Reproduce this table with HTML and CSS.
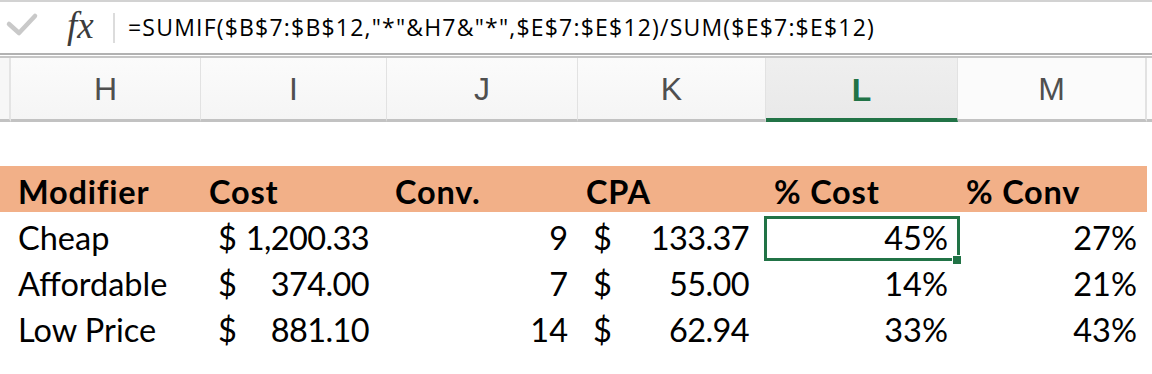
FILE: index.html
```html
<!DOCTYPE html>
<html>
<head>
<meta charset="utf-8">
<link rel="stylesheet" href="styles.css">
</head>
<body>
<div class="formula-bar">
  <svg class="check" width="40" height="40" viewBox="0 0 40 40"><polyline points="9,25 19,34 35,17" fill="none" stroke="#c9c9c9" stroke-width="4.5" stroke-linecap="round" stroke-linejoin="round"/></svg>
  <span class="fx">fx</span>
  <span class="sep"></span>
  <span class="formula">=SUMIF($B$7:$B$12,"*"&amp;H7&amp;"*",$E$7:$E$12)/SUM($E$7:$E$12)</span>
</div>
<div class="col-headers">
  <div class="stub"></div>
  <div class="ch w1">H</div>
  <div class="ch w2">I</div>
  <div class="ch w3">J</div>
  <div class="ch w4">K</div>
  <div class="ch w5 selected">L</div>
  <div class="ch w6 last">M</div>
  <div class="ch-rest"></div>
</div>
<div class="sheet">
  <div class="row head">
    <div class="stub"></div>
    <div class="cell">Modifier</div>
    <div class="cell">Cost</div>
    <div class="cell">Conv.</div>
    <div class="cell">CPA</div>
    <div class="cell">% Cost</div>
    <div class="cell">% Conv</div>
  </div>
  <div class="row">
    <div class="stub"></div>
    <div class="cell">Cheap</div>
    <div class="cell acct acct-i"><span>$</span><span class="amt">1,200.33</span></div>
    <div class="cell num">9</div>
    <div class="cell acct acct-k"><span>$</span><span class="amt">133.37</span></div>
    <div class="cell num active">45%<span class="handle"></span></div>
    <div class="cell num">27%</div>
  </div>
  <div class="row">
    <div class="stub"></div>
    <div class="cell">Affordable</div>
    <div class="cell acct acct-i"><span>$</span><span class="amt">374.00</span></div>
    <div class="cell num">7</div>
    <div class="cell acct acct-k"><span>$</span><span class="amt">55.00</span></div>
    <div class="cell num">14%</div>
    <div class="cell num">21%</div>
  </div>
  <div class="row">
    <div class="stub"></div>
    <div class="cell">Low Price</div>
    <div class="cell acct acct-i"><span>$</span><span class="amt">881.10</span></div>
    <div class="cell num">14</div>
    <div class="cell acct acct-k"><span>$</span><span class="amt">62.94</span></div>
    <div class="cell num">33%</div>
    <div class="cell num">43%</div>
  </div>
</div>
</body>
</html>
```
FILE: styles.css
```css
* { box-sizing: border-box; }
html, body { margin: 0; padding: 0; background: #fff; }
body { width: 1152px; height: 374px; overflow: hidden; font-family: Lato, "Liberation Sans", sans-serif; color: #000; }

.formula-bar {
  height: 55px;
  border-top: 2px solid #d2d2d2;
  border-bottom: 2px solid #b2b2b2;
  display: flex;
  align-items: center;
}
.check { align-self: flex-start; margin-top: -3px; flex: none; }
.fx {
  font-family: "Liberation Serif", serif;
  font-style: italic;
  font-size: 37px;
  color: #3c3c3c;
  margin-left: 27px;
  margin-top: -4px;
  width: 46px;
  flex: none;
}
.sep { width: 2px; height: 30px; background: #dcdcdc; flex: none; }
.formula {
  font-family: "Open Sans", "Liberation Sans", sans-serif;
  font-size: 23px;
  letter-spacing: 1.2px;
  margin-left: 13px;
  margin-top: -2px;
  white-space: nowrap;
}

.col-headers {
  display: flex;
  height: 66px;
  border-top: 2px solid #c6c6c6;
  margin-top: 1px;
}
.stub { width: 11px; flex: none; }
.col-headers .stub { border-right: 2px solid #e4e4e4; background: #f7f7f7; border-bottom: 3px solid #c2c2c2; }
.ch {
  flex: none;
  display: flex;
  align-items: center;
  justify-content: center;
  font-family: "Liberation Sans", Arial, sans-serif;
  font-size: 32px;
  color: #4f4f4f;
  background: linear-gradient(#fbfbfb, #f5f5f5);
  border-right: 1px solid #e2e2e2;
  border-bottom: 3px solid #c2c2c2;
  padding-top: 2px;
}
.ch-rest { flex: 1; border-bottom: 3px solid #c2c2c2; background: #fcfcfc; }
.w1 { width: 190px; }
.w2 { width: 186px; }
.w3 { width: 191px; }
.w4 { width: 188px; }
.w5 { width: 192px; }
.w6 { width: 189px; }
.ch.selected {
  background: linear-gradient(#efefef, #e9e9e9);
  color: #217346;
  font-weight: bold;
  border-bottom: 4px solid #217346;
  padding-top: 4px;
}
.ch.last { background: #fbfbfb; border-right: 2px solid #e2e2e2; }

.sheet { margin-top: 44px; }
.row {
  display: grid;
  grid-template-columns: 10px 191px 186px 191px 188px 192px 189px;
  height: 46px;
  font-size: 32.5px;
  align-items: end;
}
.row.head { width: 1147px; background: #f2b088; font-weight: bold; letter-spacing: 0.8px; }
.cell {
  padding-left: 8px;
  padding-right: 10px;
  padding-bottom: 0;
  white-space: nowrap;
  line-height: 40px;
  position: relative;
}
.num { text-align: right; }
.acct { display: flex; justify-content: space-between; }
.acct-i { padding-left: 17px; padding-right: 18px; }
.acct-k { padding-left: 15px; padding-right: 17px; }
.amt { letter-spacing: -0.6px; }

.active::before {
  content: "";
  position: absolute;
  left: -2px; right: -2px; top: -2px; bottom: -3px;
  border: 3px solid #217346;
}
.handle {
  position: absolute;
  right: -4px; bottom: -7px;
  width: 10px; height: 10px;
  background: #217346;
  border: 1px solid #fff;
}
```
